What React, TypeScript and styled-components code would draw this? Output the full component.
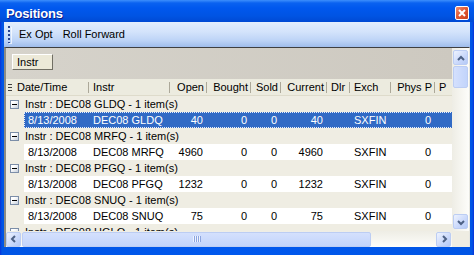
import { createGlobalStyle, styled } from 'styled-components'

const GlobalStyle = createGlobalStyle`
  html, body {
    margin: 0;
    padding: 0;
    background: #ffffff;
  }
  body {
    font-family: 'Liberation Sans', Arial, sans-serif;
    font-size: 11px;
    color: #000;
  }
  * {
    box-sizing: border-box;
  }
`

type Align = 'left' | 'right'
type Column = { key: string; title: string; w: number; align: Align }

// first column width is measured from the end of the indent / header grip
const COLUMNS: Column[] = [
  { key: 'date', title: 'Date/Time', w: 0, align: 'left' },
  { key: 'instr', title: 'Instr', w: 81, align: 'left' },
  { key: 'open', title: 'Open', w: 37, align: 'right' },
  { key: 'bought', title: 'Bought', w: 44, align: 'right' },
  { key: 'sold', title: 'Sold', w: 30, align: 'right' },
  { key: 'current', title: 'Current', w: 46, align: 'right' },
  { key: 'dlr', title: 'Dlr', w: 23, align: 'left' },
  { key: 'exch', title: 'Exch', w: 41, align: 'left' },
  { key: 'phys', title: 'Phys P', w: 44, align: 'right' },
  { key: 'p', title: 'P', w: 40, align: 'left' },
]

const FIRST_COL = 83

type Position = Record<string, string>

const POSITIONS: Position[] = [
  { date: '8/13/2008', instr: 'DEC08 GLDQ', open: '40', bought: '0', sold: '0', current: '40', dlr: '', exch: 'SXFIN', phys: '0', p: '' },
  { date: '8/13/2008', instr: 'DEC08 MRFQ', open: '4960', bought: '0', sold: '0', current: '4960', dlr: '', exch: 'SXFIN', phys: '0', p: '' },
  { date: '8/13/2008', instr: 'DEC08 PFGQ', open: '1232', bought: '0', sold: '0', current: '1232', dlr: '', exch: 'SXFIN', phys: '0', p: '' },
  { date: '8/13/2008', instr: 'DEC08 SNUQ', open: '75', bought: '0', sold: '0', current: '75', dlr: '', exch: 'SXFIN', phys: '0', p: '' },
  { date: '8/13/2008', instr: 'DEC08 HGLQ', open: '10', bought: '0', sold: '0', current: '10', dlr: '', exch: 'SXFIN', phys: '0', p: '' },
]

const Window = styled.div`
  width: 474px;
  height: 255px;
  display: flex;
  flex-direction: column;
  background: linear-gradient(90deg, #0831d9 0, #0055e5 2px, #0058ee 50%, #0055e5 calc(100% - 2px), #0831d9 100%);
  overflow: hidden;
`

const TitleBar = styled.div`
  height: 22px;
  flex: none;
  display: flex;
  align-items: center;
  padding: 4px 5px 0 6px;
  background: linear-gradient(#3d8ffc 0, #0a62f0 3px, #0058ee 8px, #0054e3 16px, #0049d4 100%);
`

const Title = styled.div`
  flex: 1;
  color: #ffffff;
  font-weight: bold;
  font-size: 13px;
  letter-spacing: -0.2px;
  text-shadow: 1px 1px 0 #0a1e8c;
`

const CloseButton = styled.div`
  width: 14px;
  height: 14px;
  display: flex;
  align-items: center;
  justify-content: center;
  border: 1px solid #ffffff;
  border-radius: 2px;
  background: linear-gradient(135deg, #f09074 0%, #e25b36 45%, #c9401b 100%);
`

const Body = styled.div`
  flex: 1;
  display: flex;
  flex-direction: column;
  padding: 0 4px 8px;
  min-height: 0;
`

const Toolbar = styled.div`
  height: 25px;
  flex: none;
  display: flex;
  align-items: center;
  padding-left: 4px;
  background: linear-gradient(#e3eefd 0%, #d3e3fb 40%, #bcd3f6 75%, #9fbdeb 100%);
`

const Grip = styled.div`
  width: 3px;
  height: 17px;
  margin-right: 4px;
  background: repeating-linear-gradient(#27418f 0 2px, transparent 2px 4px);
  background-size: 2px 100%;
  background-repeat: no-repeat;
  box-shadow: 1px 1px 0 rgba(255, 255, 255, 0.7);
`

const ToolItem = styled.div`
  padding: 0 6px 0 4px;
  color: #000;
  line-height: 25px;
`

const GridFrame = styled.div`
  flex: 1;
  min-height: 0;
  display: grid;
  grid-template-columns: 446px 17px;
  grid-template-rows: 183px 16px;
  border-top: 1px solid #3f3f3f;
  border-left: 2px solid #8b8b85;
  border-right: 1px solid #e6e6e0;
  background: #ffffff;
`

const Main = styled.div`
  display: flex;
  flex-direction: column;
  overflow: hidden;
  background: #efede3;
`

const GroupPanel = styled.div`
  height: 31px;
  flex: none;
  padding: 6px 0 0 6px;
  background: linear-gradient(90deg, #d6d3cb, #cdc9c0);
`

const GroupChip = styled.div`
  width: 41px;
  height: 16px;
  padding-left: 4px;
  line-height: 14px;
  background: #ece9d8;
  border: 1px solid;
  border-color: #ffffff #716f64 #716f64 #ffffff;
`

const HeaderRow = styled.div`
  height: 17px;
  flex: none;
  display: flex;
  background: #ecebdf;
  border-bottom: 1px solid #dedbcb;
`

const HeaderGrip = styled.div`
  width: 7px;
  flex: none;
  display: flex;
  align-items: center;
  justify-content: center;
`

const HeaderCell = styled.div<{ $w: number; $align: Align }>`
  width: ${p => p.$w}px;
  flex: none;
  padding: 0 ${p => (p.$align === 'right' ? 3 : 4)}px;
  line-height: 16px;
  text-align: ${p => p.$align};
  white-space: nowrap;
  overflow: hidden;
  background: linear-gradient(#aca899, #aca899) no-repeat right 3px / 1px 11px;
`

const GroupRow = styled.div`
  height: 16px;
  flex: none;
  display: flex;
  align-items: center;
  padding-left: 4px;
  background: #efede3;
  white-space: nowrap;
`

const Toggler = styled.div`
  width: 9px;
  height: 9px;
  margin-right: 6px;
  display: flex;
  align-items: center;
  justify-content: center;
  border: 1px solid #7c8ea8;
  background: linear-gradient(135deg, #ffffff 30%, #c6cfdb);
  &::before {
    content: '';
    width: 5px;
    height: 1px;
    background: #000;
  }
`

const DataRow = styled.div`
  height: 16px;
  flex: none;
  display: flex;
  background: #efede3;
`

const Indent = styled.div`
  width: 18px;
  flex: none;
`

const DataCells = styled.div<{ $selected?: boolean }>`
  flex: 1;
  display: flex;
  background: ${p => (p.$selected ? '#316ac5' : '#ffffff')};
  color: ${p => (p.$selected ? '#ffffff' : '#000000')};
  outline: ${p => (p.$selected ? '1px dotted #e8eefa' : 'none')};
  outline-offset: -1px;
`

const Cell = styled.div<{ $w: number; $align: Align }>`
  width: ${p => p.$w}px;
  flex: none;
  padding: 0 4px;
  line-height: 16px;
  text-align: ${p => p.$align};
  white-space: nowrap;
  overflow: hidden;
`

const VScroll = styled.div`
  display: flex;
  flex-direction: column;
  align-items: center;
  padding: 2px 0;
  background: linear-gradient(90deg, #eeede5, #fdfdfa);
`

const HScroll = styled.div`
  display: flex;
  align-items: center;
  padding: 0 1px 0 0;
  background: linear-gradient(#eeede5, #fdfdfa);
`

const ScrollButton = styled.div`
  width: 15px;
  height: 15px;
  flex: none;
  display: flex;
  align-items: center;
  justify-content: center;
  border: 1px solid #bccdf3;
  border-radius: 2px;
  background: linear-gradient(135deg, #eef3fe 0%, #c9d8fb 60%, #b4c9f6 100%);
`

const Track = styled.div`
  flex: 1;
`

const VThumb = styled.div`
  width: 15px;
  height: 22px;
  margin-top: 1px;
  border: 1px solid #bccdf3;
  border-radius: 2px;
  background: linear-gradient(90deg, #d4e0fd, #c2d4fb);
`

const HThumb = styled.div<{ $w: number }>`
  width: ${p => p.$w}px;
  height: 15px;
  margin-left: 1px;
  display: flex;
  align-items: center;
  justify-content: center;
  border: 1px solid #bccdf3;
  border-radius: 2px;
  background: linear-gradient(#d4e0fd, #c2d4fb);
`

const ThumbGrip = styled.div`
  width: 8px;
  height: 6px;
  background: repeating-linear-gradient(90deg, #eef3ff 0 1px, #8ca5e0 1px 2px);
`

const Corner = styled.div`
  background: #efede3;
`

const Chevron = ({ dir }: { dir: 'up' | 'down' | 'left' | 'right' }) => {
  const points = {
    up: '1,6 4,3 7,6',
    down: '1,3 4,6 7,3',
    left: '5,1 2,4 5,7',
    right: '3,1 6,4 3,7',
  }[dir]
  return (
    <svg width='8' height='8' viewBox='0 0 8 8'>
      <polyline points={points} fill='none' stroke='#4d6185' strokeWidth='2' />
    </svg>
  )
}

const CloseIcon = () => (
  <svg width='8' height='8' viewBox='0 0 8 8'>
    <path d='M1 1 L7 7 M7 1 L1 7' stroke='#ffffff' strokeWidth='2' />
  </svg>
)

const ColumnIcon = () => (
  <svg width='4' height='9' viewBox='0 0 4 9'>
    <path d='M0 1.5 H4 M0 4.5 H4 M0 7.5 H4' stroke='#3f3f3f' strokeWidth='1' />
  </svg>
)

export default function App() {
  return (
    <>
      <GlobalStyle />
      <Window>
        <TitleBar>
          <Title>Positions</Title>
          <CloseButton>
            <CloseIcon />
          </CloseButton>
        </TitleBar>
        <Body>
          <Toolbar>
            <Grip />
            <ToolItem>Ex Opt</ToolItem>
            <ToolItem>Roll Forward</ToolItem>
          </Toolbar>
          <GridFrame>
            <Main>
              <GroupPanel>
                <GroupChip>Instr</GroupChip>
              </GroupPanel>
              <HeaderRow>
                <HeaderGrip>
                  <ColumnIcon />
                </HeaderGrip>
                {COLUMNS.map(c => (
                  <HeaderCell key={c.key} $w={c.w || FIRST_COL - 7} $align={c.align}>
                    {c.title}
                  </HeaderCell>
                ))}
              </HeaderRow>
              {POSITIONS.map((pos, i) => (
                <div key={pos.instr}>
                  <GroupRow>
                    <Toggler />
                    Instr : {pos.instr} - 1 item(s)
                  </GroupRow>
                  <DataRow>
                    <Indent />
                    <DataCells $selected={i === 0}>
                      {COLUMNS.map(c => (
                        <Cell key={c.key} $w={c.w || FIRST_COL - 18} $align={c.align}>
                          {pos[c.key]}
                        </Cell>
                      ))}
                    </DataCells>
                  </DataRow>
                </div>
              ))}
            </Main>
            <VScroll>
              <ScrollButton>
                <Chevron dir='up' />
              </ScrollButton>
              <VThumb />
              <Track />
              <ScrollButton>
                <Chevron dir='down' />
              </ScrollButton>
            </VScroll>
            <HScroll>
              <ScrollButton>
                <Chevron dir='left' />
              </ScrollButton>
              <HThumb $w={349}>
                <ThumbGrip />
              </HThumb>
              <Track />
              <ScrollButton>
                <Chevron dir='right' />
              </ScrollButton>
            </HScroll>
            <Corner />
          </GridFrame>
        </Body>
      </Window>
    </>
  )
}
